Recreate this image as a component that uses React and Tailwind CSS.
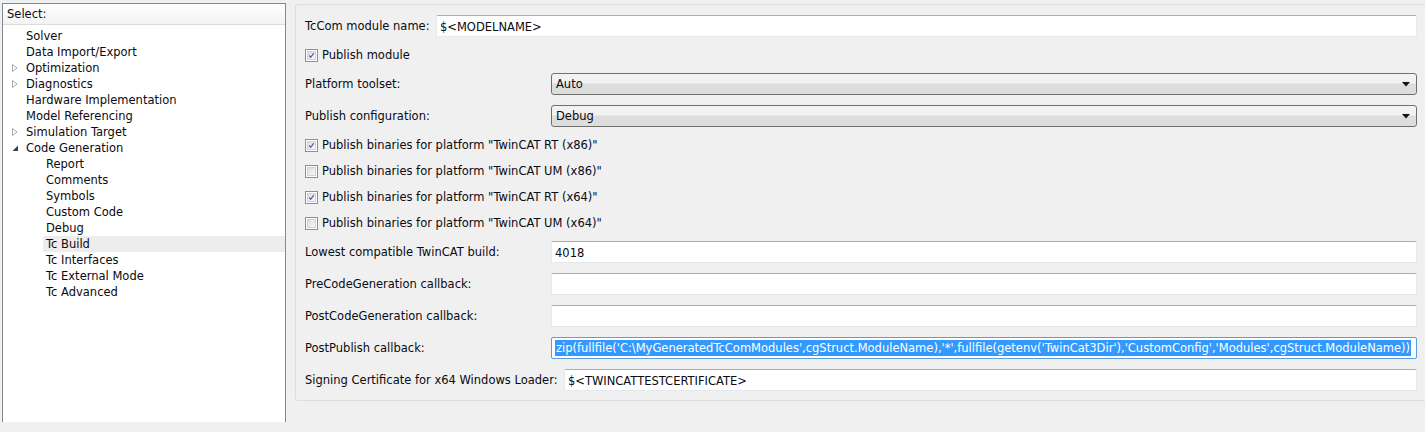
const font = { fontFamily: '"DejaVu Sans", Verdana, sans-serif' }

const tree = [
  { label: 'Solver', level: 0 },
  { label: 'Data Import/Export', level: 0 },
  { label: 'Optimization', level: 0, arrow: 'closed' },
  { label: 'Diagnostics', level: 0, arrow: 'closed' },
  { label: 'Hardware Implementation', level: 0 },
  { label: 'Model Referencing', level: 0 },
  { label: 'Simulation Target', level: 0, arrow: 'closed' },
  { label: 'Code Generation', level: 0, arrow: 'open' },
  { label: 'Report', level: 1 },
  { label: 'Comments', level: 1 },
  { label: 'Symbols', level: 1 },
  { label: 'Custom Code', level: 1 },
  { label: 'Debug', level: 1 },
  { label: 'Tc Build', level: 1, selected: true },
  { label: 'Tc Interfaces', level: 1 },
  { label: 'Tc External Mode', level: 1 },
  { label: 'Tc Advanced', level: 1 },
]

function Arrow({ kind }) {
  if (kind === 'closed') {
    return (
      <svg width="8" height="10" viewBox="0 0 8 10" className="block">
        <path d="M1.5 1.5 L6 5 L1.5 8.5 Z" fill="none" stroke="#a6a6a6" strokeWidth="1" />
      </svg>
    )
  }
  return (
    <svg width="8" height="10" viewBox="0 0 8 10" className="block">
      <path d="M7 2.5 L7 8 L1.5 8 Z" fill="#404040" />
    </svg>
  )
}

function TreeRow({ item }) {
  return (
    <div className="flex h-4 items-center">
      <div className={item.level ? 'w-[40px] shrink-0' : 'w-[8px] shrink-0'} />
      {item.level === 0 && (
        <div className="flex w-[14px] shrink-0 items-center">{item.arrow && <Arrow kind={item.arrow} />}</div>
      )}
      <div className={'flex h-4 flex-1 items-center ' + (item.level ? 'pl-[3px] ' : 'pl-[1px] ') + (item.selected ? 'bg-[#ededed]' : '')}>
        <span className="translate-y-px text-[11.5px] leading-none text-[#0a0a10]">{item.label}</span>
      </div>
    </div>
  )
}

function Checkbox({ checked }) {
  return (
    <div className="flex h-[13px] w-[13px] items-center justify-center border border-[#8f8f8f] bg-white">
      <div className="flex h-[9px] w-[9px] items-center justify-center border border-[#d2d2d2] bg-gradient-to-br from-[#dcdcdc] to-[#fafafa]">
        {checked && (
          <svg width="9" height="9" viewBox="0 0 9 9" className="block">
            <path d="M1.5 4.5 L3.5 6.8 L7.5 1.5" fill="none" stroke="#4a64a8" strokeWidth="1.6" />
          </svg>
        )}
      </div>
    </div>
  )
}

function CheckRow({ checked, label }) {
  return (
    <div className="flex h-4 items-center gap-[4px] pl-[9px]">
      <Checkbox checked={checked} />
      <span className="translate-y-px text-[11.5px] text-[#0a0a10]">{label}</span>
    </div>
  )
}

function TextInput({ value, focused, selected }) {
  return (
    <div
      className={
        'flex h-[22px] flex-1 items-center overflow-hidden rounded-[2px] border bg-white pl-[3px] ' +
        (focused ? 'border-[#569de5]' : 'border-[#e3e9ef] border-t-[#abadb3]')
      }
    >
      {value && (
        <span
          className={
            'whitespace-nowrap text-[11.5px] leading-[16px] ' +
            (selected ? 'bg-[#3399ff] px-[1px] text-white' : 'translate-y-px text-[#0a0a10]')
          }
        >
          {value}
        </span>
      )}
    </div>
  )
}

function Dropdown({ value }) {
  return (
    <div className="flex h-[22px] flex-1 items-center justify-between rounded-[3px] border border-[#707070] bg-gradient-to-b from-[#f2f2f2] from-45% to-[#dddddd] to-50% pl-[4px] pr-[6px]">
      <span className="translate-y-px text-[11.5px] text-[#0a0a10]">{value}</span>
      <svg width="8" height="5" viewBox="0 0 8 5" className="block">
        <path d="M0 0 L8 0 L4 4.5 Z" fill="#111" />
      </svg>
    </div>
  )
}

function FieldRow({ label, children, labelWidth = 'w-[246px]' }) {
  return (
    <div className="flex h-[22px] items-center pl-[9px]">
      <div className={labelWidth + ' shrink-0 translate-y-px text-[11.5px] text-[#0a0a10]'}>{label}</div>
      {children}
    </div>
  )
}

export default function App() {
  const selectedValue =
    "zip(fullfile('C:\\MyGeneratedTcComModules',cgStruct.ModuleName),'*',fullfile(getenv('TwinCat3Dir'),'CustomConfig','Modules',cgStruct.ModuleName))"

  return (
    <div className="flex h-[432px] w-[1425px] flex-col overflow-hidden bg-[#f0f0f0]" style={font}>
      <div className="flex h-[422px] pt-[3px]">
        {/* Left tree pane */}
        <div className="ml-[2px] flex w-[284px] shrink-0 flex-col border-x border-t border-[#828790] bg-white">
          <div className="flex h-[21px] items-center border-b border-[#dcdcdc] bg-gradient-to-b from-white to-[#f3f3f3] pl-[4px]">
            <span className="translate-y-px text-[11.5px] text-[#0a0a10]">Select:</span>
          </div>
          <div className="pt-[3px]">
            {tree.map((item) => (
              <TreeRow key={item.label} item={item} />
            ))}
          </div>
        </div>

        {/* Right settings group */}
        <div className="ml-[9px] flex-1 pt-[1px]">
          <div className="-mr-2 flex flex-col gap-[10px] rounded-[3px] border border-[#d5dfe5] pb-[9px] pr-[15px] pt-[10px]">
            <FieldRow label="TcCom module name:" labelWidth="w-[131px]">
              <TextInput value="$<MODELNAME>" />
            </FieldRow>
            <CheckRow checked label="Publish module" />
            <FieldRow label="Platform toolset:">
              <Dropdown value="Auto" />
            </FieldRow>
            <FieldRow label="Publish configuration:">
              <Dropdown value="Debug" />
            </FieldRow>
            <CheckRow checked label={'Publish binaries for platform "TwinCAT RT (x86)"'} />
            <CheckRow label={'Publish binaries for platform "TwinCAT UM (x86)"'} />
            <CheckRow checked label={'Publish binaries for platform "TwinCAT RT (x64)"'} />
            <CheckRow label={'Publish binaries for platform "TwinCAT UM (x64)"'} />
            <FieldRow label="Lowest compatible TwinCAT build:">
              <TextInput value="4018" />
            </FieldRow>
            <FieldRow label="PreCodeGeneration callback:">
              <TextInput />
            </FieldRow>
            <FieldRow label="PostCodeGeneration callback:">
              <TextInput />
            </FieldRow>
            <FieldRow label="PostPublish callback:">
              <TextInput value={selectedValue} focused selected />
            </FieldRow>
            <FieldRow label="Signing Certificate for x64 Windows Loader:" labelWidth="w-[259px]">
              <TextInput value="$<TWINCATTESTCERTIFICATE>" />
            </FieldRow>
          </div>
        </div>
      </div>
    </div>
  )
}
